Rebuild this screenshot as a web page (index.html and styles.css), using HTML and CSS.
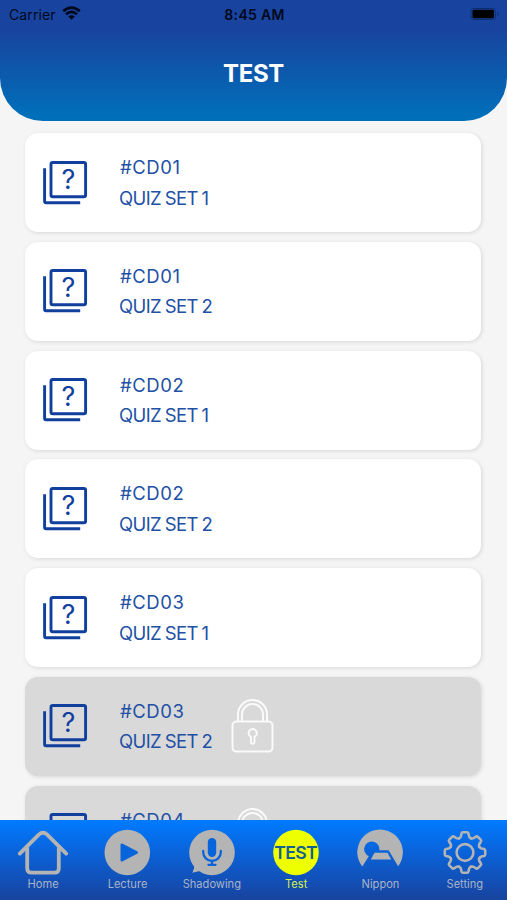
FILE: index.html
```html
<!DOCTYPE html>
<html lang="en">
<head>
<meta charset="utf-8">
<title>Test</title>
<link rel="stylesheet" href="styles.css">
</head>
<body>
<svg class="defs" width="0" height="0" aria-hidden="true">
  <symbol id="quiz" viewBox="0 0 46 46">
    <g fill="none" stroke="#103f9d" stroke-width="2.9" stroke-linejoin="round">
      <rect x="9" y="2.5" width="34.6" height="34.2" rx="1.8"/>
      <path d="M2.6 8.2V41.3Q2.6 42.7 4 42.7H38.2"/>
    </g>
  </symbol>
  <symbol id="lock" viewBox="0 0 44 56">
    <g fill="none" stroke="#fafafa" stroke-width="2">
      <rect x="2.5" y="23.6" width="40" height="30" rx="4"/>
      <path d="M8 23.5V16.5a14.5 14.5 0 0 1 29 0V23.5"/>
      <path d="M12 23.5V16.5a10.5 10.5 0 0 1 21 0V23.5"/>
      <path d="M20.9 38.9a4.1 4.1 0 1 1 3.6 0V44a1.8 1.8 0 0 1-3.6 0z"/>
    </g>
  </symbol>
</svg>
<div class="screen">
  <header class="header">
    <div class="status">
      <div class="carrier"><span>Carrier</span>
        <svg width="19" height="14" viewBox="0 0 19 14"><g fill="none" stroke="#02081c" stroke-width="2.7"><path d="M1.2 5.1Q9.5-2 17.8 5.1"/><path d="M4 8.2Q9.5 3.7 15 8.2"/></g><path d="M6.2 10.5Q9.5 8 12.8 10.5L9.5 13.8z" fill="#02081c"/></svg>
      </div>
      <div class="time">8:45 AM</div>
      <div class="power">
        <svg width="30" height="14" viewBox="0 0 30 14"><rect x="1" y="1.5" width="24.5" height="11" rx="3" fill="none" stroke="#0a2e74" stroke-width="1"/><rect x="2.5" y="2.7" width="21.5" height="8.6" rx="1.5" fill="#000"/><path d="M27.3 5v4q1.5-.6 1.5-2t-1.5-2z" fill="#0a2e74"/></svg>
      </div>
    </div>
    <h1 class="title">TEST</h1>
  </header>
  <main class="list">
    <section class="card"><svg class="quiz-icon" viewBox="0 0 46 46"><use href="#quiz"/><text x="26.5" y="28.5" text-anchor="middle" class="quiz-mark">?</text></svg><div class="label"><p class="code">#CD01</p><p class="set">QUIZ SET 1</p></div></section>
    <section class="card"><svg class="quiz-icon" viewBox="0 0 46 46"><use href="#quiz"/><text x="26.5" y="28.5" text-anchor="middle" class="quiz-mark">?</text></svg><div class="label"><p class="code">#CD01</p><p class="set">QUIZ SET 2</p></div></section>
    <section class="card"><svg class="quiz-icon" viewBox="0 0 46 46"><use href="#quiz"/><text x="26.5" y="28.5" text-anchor="middle" class="quiz-mark">?</text></svg><div class="label"><p class="code">#CD02</p><p class="set">QUIZ SET 1</p></div></section>
    <section class="card"><svg class="quiz-icon" viewBox="0 0 46 46"><use href="#quiz"/><text x="26.5" y="28.5" text-anchor="middle" class="quiz-mark">?</text></svg><div class="label"><p class="code">#CD02</p><p class="set">QUIZ SET 2</p></div></section>
    <section class="card"><svg class="quiz-icon" viewBox="0 0 46 46"><use href="#quiz"/><text x="26.5" y="28.5" text-anchor="middle" class="quiz-mark">?</text></svg><div class="label"><p class="code">#CD03</p><p class="set">QUIZ SET 1</p></div></section>
    <section class="card locked"><svg class="quiz-icon" viewBox="0 0 46 46"><use href="#quiz"/><text x="26.5" y="28.5" text-anchor="middle" class="quiz-mark">?</text></svg><div class="label"><p class="code">#CD03</p><p class="set">QUIZ SET 2</p></div><svg class="lock-icon"><use href="#lock"/></svg></section>
    <section class="card locked"><svg class="quiz-icon" viewBox="0 0 46 46"><use href="#quiz"/></svg><div class="label"><p class="code">#CD04</p><p class="set">&nbsp;</p></div><svg class="lock-icon"><use href="#lock"/></svg></section>
  </main>
  <nav class="tabs">
    <a class="tab"><svg viewBox="0 0 52 48"><g fill="none" stroke="#b4b4b4" stroke-width="3.8" stroke-linecap="round" stroke-linejoin="round"><path d="M2.8 24.6L21.8 5.6Q26 1.8 30.2 5.6L49.2 24.6"/><path d="M10.2 19.5V39.3Q10.2 43.7 14.6 43.7H37.4Q41.8 43.7 41.8 39.3V19.5"/></g></svg><span>Home</span></a>
    <a class="tab"><svg viewBox="0 0 52 48"><circle cx="26.3" cy="23.5" r="22.8" fill="#b4b4b4"/><path d="M21 16V31L35.5 23.5z" fill="#0864da" stroke="#0864da" stroke-width="3" stroke-linejoin="round"/></svg><span>Lecture</span></a>
    <a class="tab"><svg viewBox="0 0 52 48"><circle cx="26" cy="23.5" r="22.8" fill="#b4b4b4"/><path d="M8 34Q9 39 6.4 43.8L18 41z" fill="#b4b4b4"/><rect x="21.8" y="8.9" width="8.4" height="19" rx="4.2" fill="#0864da"/><path d="M17.2 22v1.2a8.8 8.8 0 0 0 17.6 0v-1.2M26 31.7v4.1M22.5 35.8h7" fill="none" stroke="#0864da" stroke-width="2.3" stroke-linecap="round"/></svg><span>Shadowing</span></a>
    <a class="tab active"><svg viewBox="0 0 52 48"><circle cx="26" cy="23.5" r="22.8" fill="#edff00"/><text x="25.6" y="29.6" text-anchor="middle" class="test-mark">TEST</text></svg><span>Test</span></a>
    <a class="tab"><svg viewBox="0 0 52 48"><path d="M8.3 37.5A22.8 22.8 0 1 1 44.1 37.2L34.6 21.2H25.3A7.6 7.6 0 1 0 14.8 27.2z" fill="#b4b4b4"/><path d="M20.5 23.8H33.5L37.2 30.6H16.8z" fill="#b4b4b4"/></svg><span>Nippon</span></a>
    <a class="tab"><svg viewBox="0 0 52 48">
      <defs><path id="tooth" d="M-5.9-14.2Q-4.4-14.8-4-16.5L-3.5-19Q-3.2-20.2-2-20.2H2Q3.2-20.2 3.5-19L4-16.5Q4.4-14.8 5.9-14.2"/></defs>
      <g transform="translate(26 23.5)" fill="none" stroke="#b4b4b4" stroke-width="2.6" stroke-linecap="round">
        <use href="#tooth"/><use href="#tooth" transform="rotate(45)"/><use href="#tooth" transform="rotate(90)"/><use href="#tooth" transform="rotate(135)"/><use href="#tooth" transform="rotate(180)"/><use href="#tooth" transform="rotate(225)"/><use href="#tooth" transform="rotate(270)"/><use href="#tooth" transform="rotate(315)"/>
        <circle r="8.4"/>
      </g></svg><span>Setting</span></a>
  </nav>
</div>
</body>
</html>
```

FILE: styles.css
```css
* { box-sizing: border-box; }
body { margin: 0; font-family: Inter, "Liberation Sans", sans-serif; }
p, h1 { margin: 0; }
.defs { display: block; height: 0; }
.screen {
  width: 507px;
  height: 900px;
  display: flex;
  flex-direction: column;
  overflow: hidden;
  background: #f5f5f5;
}
.header {
  flex: none;
  height: 120.5px;
  border-radius: 0 0 43px 43px;
  background: linear-gradient(#18439e 0%, #18449f 25%, #006fba 96%);
}
.status {
  display: grid;
  grid-template-columns: 1fr auto 1fr;
  align-items: center;
  height: 28px;
  padding: 0 7px 0 9px;
  font-size: 14px;
  color: #02081c;
}
.carrier { display: flex; align-items: center; gap: 6px; letter-spacing: 0.1px; }
.carrier svg { margin-top: -2px; }
.time { font-weight: 600; letter-spacing: 0.3px; }
.power { display: flex; justify-content: flex-end; margin-top: -1px; }
.title {
  margin-top: 31px;
  text-align: center;
  color: #fff;
  font-size: 24px;
  line-height: 30px;
  font-weight: 700;
  letter-spacing: -0.3px;
}
.list {
  flex: 1;
  min-height: 0;
  overflow: hidden;
  display: flex;
  flex-direction: column;
  gap: 9.75px;
  padding: 12.5px 26px 0 25px;
}
.card {
  flex: none;
  display: flex;
  align-items: center;
  height: 99px;
  padding-left: 17px;
  border-radius: 13px;
  background: #fff;
  box-shadow: 1px 1px 4px rgba(0, 0, 0, 0.12);
}
.locked { background: #d9d9d9; }
.quiz-icon { width: 46px; height: 46px; flex: none; }
.quiz-mark { font: 400 27px Inter, sans-serif; fill: #103f9d; }
.label {
  width: 110px;
  margin-left: 31px;
  color: #2250a5;
  font-size: 18.5px;
  line-height: 30.5px;
  white-space: nowrap;
}
.code { padding-left: 1px; letter-spacing: 0.55px; }
.set { letter-spacing: -0.6px; word-spacing: -1px; }
.lock-icon { width: 44px; height: 56px; flex: none; margin-left: 1px; }
.tabs {
  flex: none;
  display: grid;
  grid-template-columns: repeat(6, 1fr);
  height: 80.5px;
  padding: 9px 0 0 1px;
  background: linear-gradient(#007bff, #0b60d5 45%, #18439e);
}
.tab {
  display: flex;
  flex-direction: column;
  align-items: center;
  color: #aab4c8;
  font-size: 11.1px;
  line-height: 14px;
}
.tab svg { width: 52px; height: 48px; flex: none; }
.tab.active { color: #d6f04a; }
.test-mark { font: 600 17.6px Inter, sans-serif; letter-spacing: -0.7px; fill: #176092; }
```
